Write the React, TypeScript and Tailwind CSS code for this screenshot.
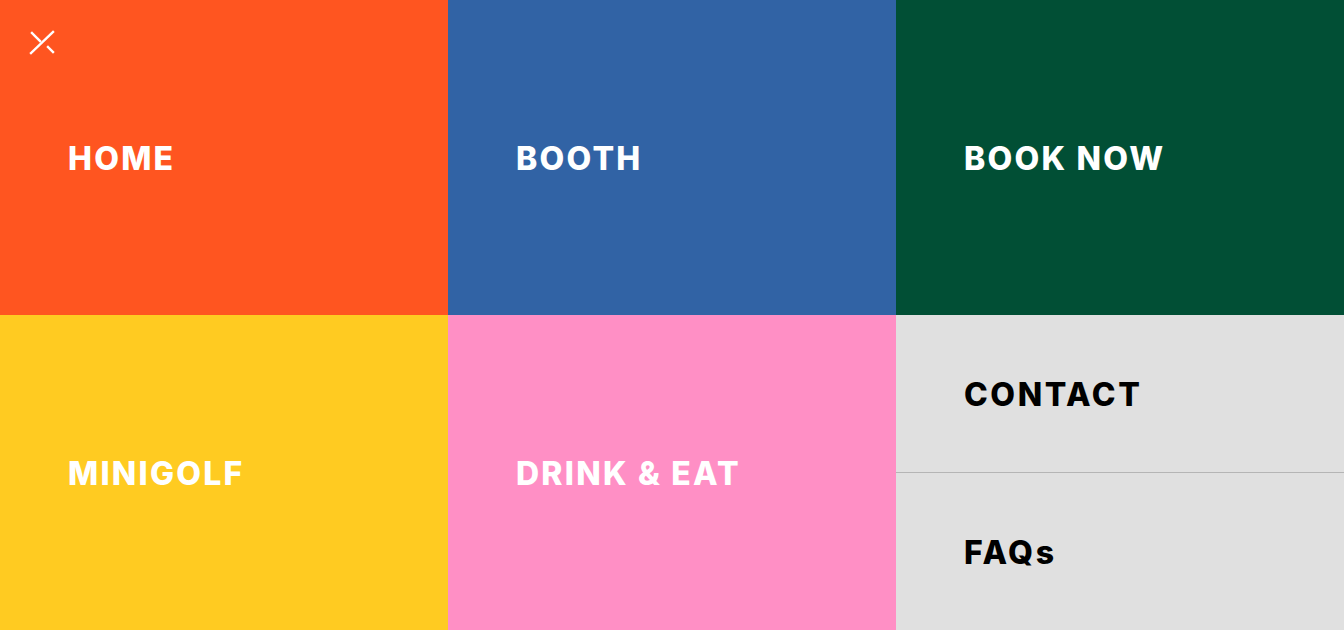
const tiles = [
  { label: "HOME", bg: "bg-[#ff5520]" },
  { label: "BOOTH", bg: "bg-[#3163a5]" },
  { label: "BOOK NOW", bg: "bg-[#014f35]" },
  { label: "MINIGOLF", bg: "bg-[#ffcb21]" },
  { label: "DRINK & EAT", bg: "bg-[#ff8fc5]" },
];

function CloseIcon() {
  return (
    <svg width="26" height="26" viewBox="0 0 26 26" fill="none" stroke="white" strokeWidth="2.4" strokeLinecap="square">
      <path d="M2 24 L24 3" />
      <path d="M3 4 L11 12" />
      <path d="M19 18 L24 23" />
    </svg>
  );
}

export default function App() {
  return (
    <div className="relative w-[1344px] h-[630px] grid grid-cols-3 grid-rows-2 font-['Inter',sans-serif]">
      {tiles.map((t) => (
        <a
          key={t.label}
          className={`${t.bg} flex items-center pl-[68px] pt-[2px] text-white text-[32px] font-extrabold tracking-[0.07em]`}
        >
          {t.label}
        </a>
      ))}
      <div className="row-start-2 col-start-3 flex flex-col bg-[#e0e0e0]">
        <a className="flex-1 flex items-center pl-[68px] pt-[2px] text-black text-[32px] font-extrabold tracking-[0.08em] border-b border-[#b5b5b5]">
          CONTACT
        </a>
        <a className="flex-1 flex items-center pl-[68px] pt-[2px] text-black text-[32px] font-extrabold tracking-[0.08em]">
          FAQs
        </a>
      </div>
      <button className="absolute left-[29px] top-[29px]">
        <CloseIcon />
      </button>
    </div>
  );
}
